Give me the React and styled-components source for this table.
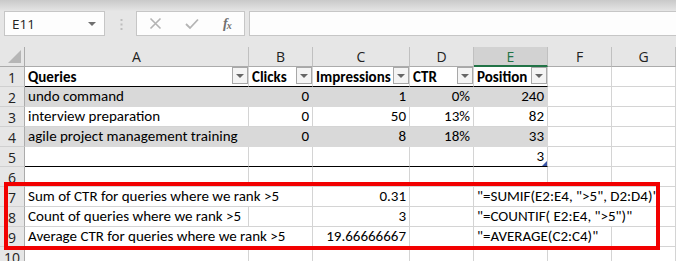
import React from "react";
import styled, { createGlobalStyle, css } from "styled-components";

const GlobalStyle = createGlobalStyle`
  html, body {
    margin: 0;
    padding: 0;
    background: #ffffff;
  }
  body {
    width: 676px;
    height: 261px;
    overflow: hidden;
    font-family: "Open Sans", "Noto Sans", sans-serif;
  }
`;

const Window = styled.div`
  width: 676px;
  height: 261px;
  overflow: hidden;
  display: flex;
  flex-direction: column;
`;

const FormulaBar = styled.div`
  flex: none;
  height: 47px;
  box-sizing: border-box;
  display: flex;
  align-items: flex-start;
  padding: 11px 0 0 4px;
  background: linear-gradient(to bottom, #c9c9c9 0px, #e2e2e2 10px, #e6e6e6 11px);
`;

const Box = styled.div`
  height: 25px;
  box-sizing: border-box;
  border: 1px solid #c6c6c6;
  background: #fdfdfd;
  display: flex;
  align-items: center;
`;

const NameBox = styled(Box)`
  width: 101px;
  padding: 0 8px 0 7px;
  justify-content: space-between;
  font-size: 13.5px;
  color: #222;
`;

const Caret = styled.span`
  width: 0;
  height: 0;
  border-left: 4px solid transparent;
  border-right: 4px solid transparent;
  border-top: 4px solid #6f6f6f;
`;

const Grip = styled.svg`
  margin: 8px 0 0 15px;
  flex: none;
`;

const FxBox = styled(Box)`
  width: 109px;
  margin-left: 13px;
  padding-left: 12px;
  gap: 23px;
`;

const FxLabel = styled.span`
  font-family: "Liberation Serif", serif;
  font-style: italic;
  font-weight: bold;
  font-size: 14px;
  color: #707070;
  letter-spacing: -1px;
  margin-left: 1px;

  sub {
    font-size: 10px;
    vertical-align: -1px;
  }
`;

const FormulaInput = styled(Box)`
  flex: 1;
  margin-left: 4px;
  border-right: none;
`;

const Sheet = styled.div`
  position: relative;
  display: grid;
  grid-template-columns: 25px 224px 64px 97px 64px 74px 64px 64px;
  grid-auto-rows: 20px;
  font-family: Calibri, Carlito, Lato, sans-serif;
  font-size: 15px;
  color: #000;
`;

const HeadCell = styled.div`
  box-sizing: border-box;
  background: ${(p) => (p.$active ? "#d2d2d2" : "#e6e6e6")};
  color: ${(p) => (p.$active ? "#217346" : "#222")};
  border-right: 1px solid #c0c0c0;
  border-bottom: ${(p) => (p.$active ? "2px solid #217346" : "1px solid #ababab")};
  font-family: "Open Sans", sans-serif;
  font-size: 14px;
  display: flex;
  align-items: center;
  justify-content: center;
  position: relative;
`;

const Corner = styled(HeadCell)`
  border-right: 1px solid #ababab;

  &::after {
    content: "";
    position: absolute;
    right: 3px;
    bottom: 3px;
    width: 0;
    height: 0;
    border-left: 13px solid transparent;
    border-bottom: 13px solid #b6b6b6;
  }
`;

const RowHead = styled(HeadCell)`
  border-right: 1px solid #ababab;
  border-bottom: 1px solid #d0d0d0;
  padding-top: 1px;
`;

const Cell = styled.div`
  box-sizing: border-box;
  position: relative;
  grid-column: span ${(p) => p.$span || 1};
  display: flex;
  align-items: center;
  justify-content: ${(p) => (p.$align === "right" ? "flex-end" : "flex-start")};
  padding: 0 3px 1px 3px;
  white-space: nowrap;
  overflow: hidden;
  font-weight: ${(p) => (p.$bold ? "bold" : "normal")};
  border-right: 1px solid #d4d4d4;
  border-bottom: 1px solid #d4d4d4;
  ${(p) =>
    p.$fill &&
    css`
      background: #d9d9d9;
      border-right-color: #d9d9d9;
      border-bottom-color: #d9d9d9;
    `}
  ${(p) =>
    p.$rule &&
    css`
      border-bottom-color: #000;
    `}
  ${(p) =>
    p.$header &&
    css`
      align-items: flex-start;
      padding: 0 0 0 3px;
      line-height: 21px;
    `}
`;

const CellText = styled.span`
  flex: ${(p) => (p.$grow ? 1 : "none")};
`;

const FilterButton = styled.span`
  flex: none;
  width: 16px;
  height: 17px;
  box-sizing: border-box;
  border: 1px solid #a8a8a8;
  background: #f4f4f4;
  display: flex;
  align-items: center;
  justify-content: center;

  &::after {
    content: "";
    border-left: 4px solid transparent;
    border-right: 4px solid transparent;
    border-top: 4px solid #666;
  }
`;

const ResizeHandle = styled.span`
  position: absolute;
  right: 0;
  bottom: 0;
  width: 0;
  height: 0;
  border-left: 5px solid transparent;
  border-bottom: 5px solid #3a56a8;
`;

const Highlight = styled.div`
  position: absolute;
  left: 4px;
  top: 135px;
  width: 656px;
  height: 68px;
  box-sizing: border-box;
  border: 4px solid #f20000;
  pointer-events: none;
`;

const columns = ["A", "B", "C", "D", "E", "F", "G"];

const header = ["Queries", "Clicks", "Impressions", "CTR", "Position"];

const tableRows = [
  ["undo command", "0", "1", "0%", "240"],
  ["interview preparation", "0", "50", "13%", "82"],
  ["agile project management training", "0", "8", "18%", "33"],
];

const notes = [
  [
    { text: "Sum of CTR for queries where we rank >5", span: 2 },
    { text: "0.31", align: "right" },
    {},
    { text: "\"=SUMIF(E2:E4, \">5\", D2:D4)\"", span: 3 },
  ],
  [
    { text: "Count of queries where we rank >5" },
    {},
    { text: "3", align: "right" },
    {},
    { text: "\"=COUNTIF( E2:E4, \">5\")\"", span: 3 },
  ],
  [
    { text: "Average CTR for queries where we rank >5", span: 2 },
    { text: "19.66666667", align: "right" },
    {},
    { text: "\"=AVERAGE(C2:C4)\"", span: 2 },
    {},
  ],
];

const emptyRow = columns.map(() => ({}));

function Grip3() {
  return (
    <Grip width="3" height="11" viewBox="0 0 3 11">
      <rect x="0.5" y="0" width="2" height="2" fill="#bdbdbd" />
      <rect x="0.5" y="4.5" width="2" height="2" fill="#bdbdbd" />
      <rect x="0.5" y="9" width="2" height="2" fill="#bdbdbd" />
    </Grip>
  );
}

function PlainRow({ n, cells }) {
  return (
    <>
      <RowHead>{n}</RowHead>
      {cells.map((c, i) => (
        <Cell key={i} $span={c.span} $align={c.align}>
          {c.text}
        </Cell>
      ))}
    </>
  );
}

export default function App() {
  return (
    <Window>
      <GlobalStyle />
      <FormulaBar>
        <NameBox>
          <span>E11</span>
          <Caret />
        </NameBox>
        <Grip3 />
        <FxBox>
          <svg width="13" height="13" viewBox="0 0 13 13">
            <path d="M1.5 1.5 L11.5 11.5 M11.5 1.5 L1.5 11.5" stroke="#b4b4b4" strokeWidth="1.6" />
          </svg>
          <svg width="14" height="12" viewBox="0 0 14 12">
            <path d="M1 6 L5 10 L13 1.5" stroke="#b4b4b4" strokeWidth="1.8" fill="none" />
          </svg>
          <FxLabel>
            f<sub>x</sub>
          </FxLabel>
        </FxBox>
        <FormulaInput />
      </FormulaBar>

      <Sheet>
        <Corner />
        {columns.map((c) => (
          <HeadCell key={c} $active={c === "E"}>
            {c}
          </HeadCell>
        ))}

        <RowHead>1</RowHead>
        {header.map((h) => (
          <Cell key={h} $header $bold $rule>
            <CellText $grow>{h}</CellText>
            <FilterButton />
          </Cell>
        ))}
        <Cell />
        <Cell />

        {tableRows.map((row, r) => (
          <React.Fragment key={r}>
            <RowHead>{r + 2}</RowHead>
            {row.map((v, i) => (
              <Cell key={i} $fill={r % 2 === 0} $align={i === 0 ? "left" : "right"}>
                {v}
              </Cell>
            ))}
            <Cell />
            <Cell />
          </React.Fragment>
        ))}

        <RowHead>5</RowHead>
        <Cell $rule />
        <Cell $rule />
        <Cell $rule />
        <Cell $rule />
        <Cell $rule $align="right">
          3
          <ResizeHandle />
        </Cell>
        <Cell />
        <Cell />

        <PlainRow n={6} cells={emptyRow} />
        {notes.map((cells, i) => (
          <PlainRow key={i} n={i + 7} cells={cells} />
        ))}
        <PlainRow n={10} cells={emptyRow} />

        <Highlight />
      </Sheet>
    </Window>
  );
}
